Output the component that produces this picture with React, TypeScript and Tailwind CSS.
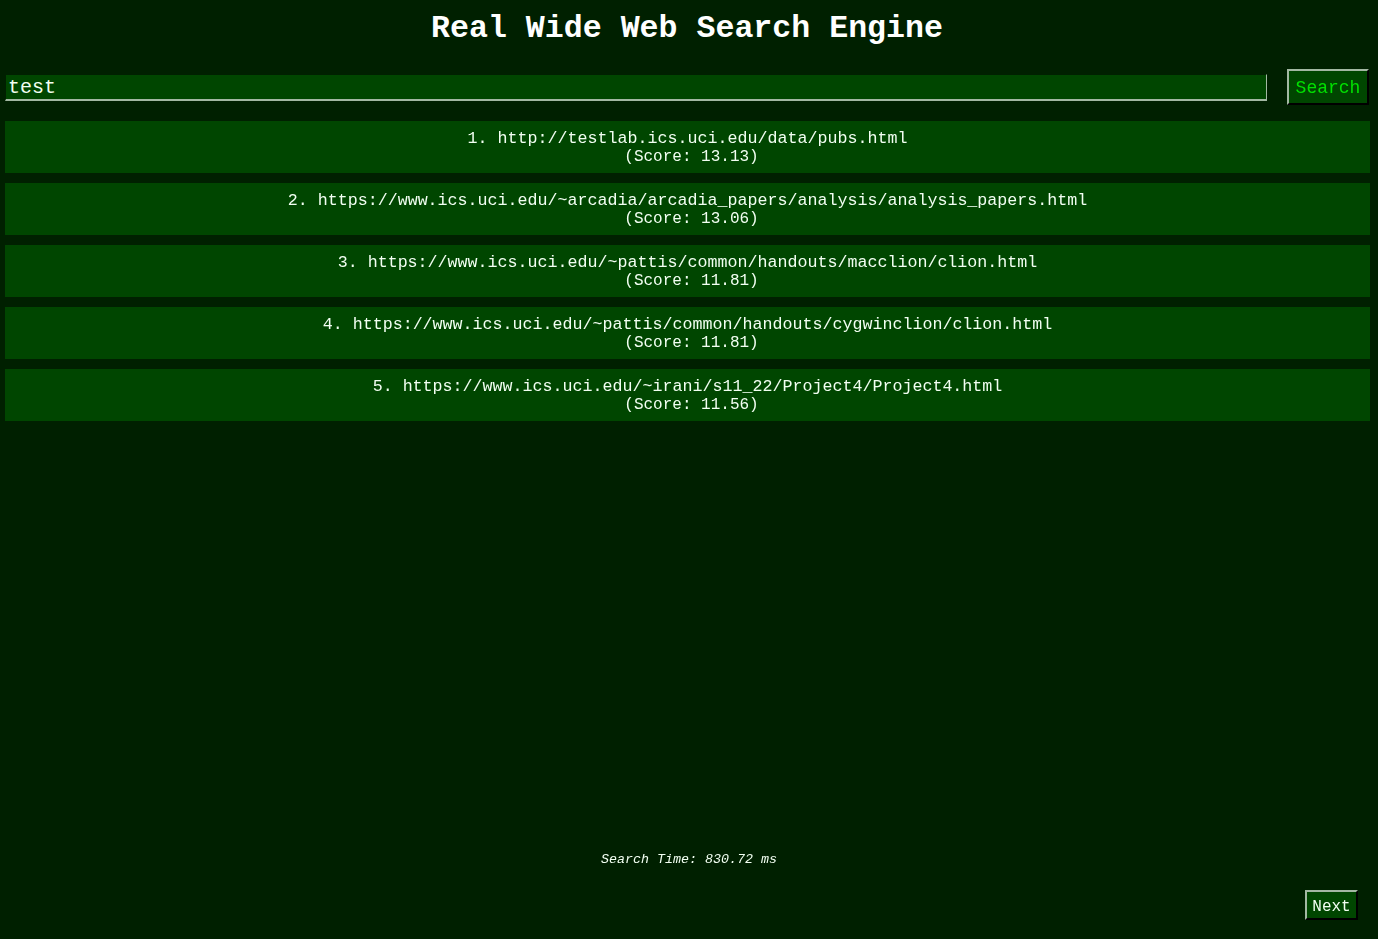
import React from "react";

const results = [
  { url: "http://testlab.ics.uci.edu/data/pubs.html", score: "13.13" },
  { url: "https://www.ics.uci.edu/~arcadia/arcadia_papers/analysis/analysis_papers.html", score: "13.06" },
  { url: "https://www.ics.uci.edu/~pattis/common/handouts/macclion/clion.html", score: "11.81" },
  { url: "https://www.ics.uci.edu/~pattis/common/handouts/cygwinclion/clion.html", score: "11.81" },
  { url: "https://www.ics.uci.edu/~irani/s11_22/Project4/Project4.html", score: "11.56" },
];

export default function App() {
  return (
    <div
      className="min-h-screen bg-[#002000] flex flex-col text-[#f2fff2]"
      style={{ fontFamily: '"Liberation Mono", "Courier New", monospace' }}
    >
      <h1 className="pt-[12px] pr-[4px] text-center text-[31.6px] leading-[34px] font-bold text-white">
        Real Wide Web Search Engine
      </h1>
      <div className="mt-[23px] flex items-center pl-[5px] pr-[9px] gap-[20px]">
        <input
          autoFocus
          defaultValue="test"
          className="flex-1 h-[27px] bg-[#004600] text-[20px] leading-[23px] pt-[2px] px-[2px] text-[#f2fff2] caret-white outline-none border-t border-l border-t-[#002000] border-l-[#002000] border-b-[2px] border-r border-b-[#a3b8a3] border-r-[#a3b8a3]"
          style={{ fontFamily: '"Liberation Mono", "Courier New", monospace' }}
        />
        <button
          className="w-[82px] h-[36px] pt-[2px] bg-[#004600] text-[#00e000] text-[18px] border-2 border-t-[#a3b8a3] border-l-[#a3b8a3] border-b-black border-r-black"
          style={{ fontFamily: '"Liberation Mono", "Courier New", monospace' }}
        >
          Search
        </button>
      </div>
      <div className="mt-[16px] pl-[5px] pr-[8px] flex flex-col gap-[10px]">
        {results.map((r, i) => (
          <div
            key={i}
            className="bg-[#004600] pt-[9px] pb-[7px] text-center leading-[18px]"
          >
            <div className="text-[16.67px]">
              {i + 1}. {r.url}
            </div>
            <div className="text-[16px] pl-[8px]">(Score: {r.score})</div>
          </div>
        ))}
      </div>
      <div className="flex-1" />
      <div className="text-center italic text-[13.33px] leading-[16px] pt-[1px]">
        Search Time: 830.72 ms
      </div>
      <div className="mt-[22px] mb-[19px] flex justify-end pr-[20px]">
        <button
          className="w-[53px] h-[30px] pt-[3px] bg-[#004600] text-[#f2fff2] text-[16px] leading-[20px] border-2 border-t-[#a3b8a3] border-l-[#a3b8a3] border-b-black border-r-black"
          style={{ fontFamily: '"Liberation Mono", "Courier New", monospace' }}
        >
          Next
        </button>
      </div>
    </div>
  );
}
